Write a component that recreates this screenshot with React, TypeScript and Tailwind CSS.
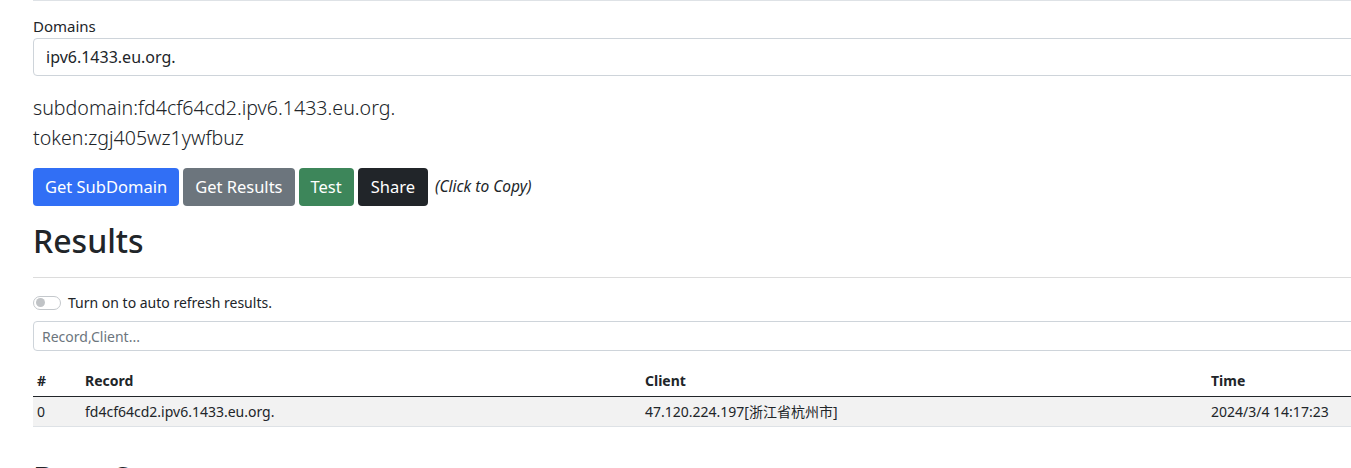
export default function App() {
    const rows = [
        { id: "0", record: "fd4cf64cd2.ipv6.1433.eu.org.", client: "47.120.224.197[浙江省杭州市]", time: "2024/3/4 14:17:23" },
    ];

    return (
        <div className="h-[468px] w-[1351px] overflow-hidden bg-white font-['Noto_Sans','Noto_Sans_CJK_SC',sans-serif] text-[#212529]">
            <div className="w-[1400px] pl-[33px]">
                {/* tail of the previous section */}
                <div className="h-px bg-[#dee2e6]" />

                {/* Domains */}
                <label className="mt-[15px] mb-[2px] block text-[15px] leading-[20px]">Domains</label>
                <div className="flex h-[38px] items-center rounded-[4px] border border-[#ced4da] px-3 text-[16px]">ipv6.1433.eu.org.</div>

                <div className="mt-[17px] text-[19.6px] leading-[30px] font-light">
                    <div>subdomain:fd4cf64cd2.ipv6.1433.eu.org.</div>
                    <div>token:zgj405wz1ywfbuz</div>
                </div>

                {/* Actions */}
                <div className="mt-[15px] flex items-center gap-[4px] text-[16.5px]">
                    <button className="h-[38px] rounded-[4px] bg-[#316ff5] px-3 text-white">Get SubDomain</button>
                    <button className="h-[38px] rounded-[4px] bg-[#6c757d] px-3 text-white">Get Results</button>
                    <button className="h-[38px] rounded-[4px] bg-[#3d865a] px-3 text-white">Test</button>
                    <button className="h-[38px] rounded-[4px] bg-[#212529] px-[13px] text-white">Share</button>
                    <i className="ml-[3px] text-[15.5px]">(Click to Copy)</i>
                </div>

                <h2 className="mt-[16px] text-[32px] leading-[38px] font-medium">Results</h2>
                <div className="mt-[17px] h-px bg-[#dcdcdc]" />

                {/* Auto refresh */}
                <div className="mt-[14px] flex items-center gap-[7px] text-[14px] leading-[21px]">
                    <span className="flex h-[14px] w-[28px] items-center rounded-full border border-[#c4c8cc] px-[2px]">
                        <span className="h-[9px] w-[9px] rounded-full bg-[#c0c3c6]" />
                    </span>
                    <span>Turn on to auto refresh results.</span>
                </div>

                <div className="mt-[8px] flex h-[30px] items-center rounded-[4px] border border-[#ced4da] px-2 text-[14px] text-[#6c757d]">Record,Client...</div>

                {/* Results table */}
                <table className="mt-[15px] w-[1400px] border-collapse text-[14px]">
                    <thead>
                        <tr className="h-[30px] border-b border-[#212529] text-left">
                            <th className="w-[48px] px-[4px] font-bold">#</th>
                            <th className="w-[560px] px-[4px] font-bold">Record</th>
                            <th className="w-[566px] px-[4px] font-bold">Client</th>
                            <th className="px-[4px] font-bold">Time</th>
                        </tr>
                    </thead>
                    <tbody>
                        {rows.map((r) => (
                            <tr key={r.id} className="h-[30px] border-b border-[#dee2e6] bg-[#f2f2f2]">
                                <td className="px-[4px]">{r.id}</td>
                                <td className="px-[4px]">{r.record}</td>
                                <td className="px-[4px]">{r.client}</td>
                                <td className="px-[4px]">{r.time}</td>
                            </tr>
                        ))}
                    </tbody>
                </table>

                <h2 className="mt-[32px] text-[32px] leading-[38px] font-medium">Data Source</h2>
            </div>
        </div>
    );
}
